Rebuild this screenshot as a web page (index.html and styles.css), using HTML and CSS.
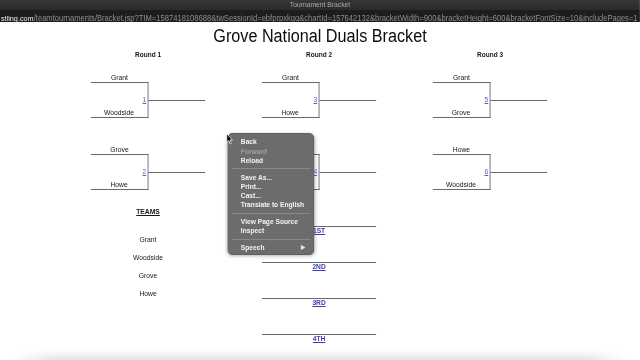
FILE: index.html
```html
<!DOCTYPE html>
<html lang="en">
<head>
<meta charset="utf-8">
<title>Tournament Bracket</title>
<link rel="stylesheet" href="styles.css">
</head>
<body>
<div class="viewport">
<div class="screen">
  <div class="titlebar">Tournament Bracket</div>
  <div class="urlbar"><span class="host">stling.com</span><span class="path">/teamtournaments/Bracket.jsp?TIM=1587418108688&amp;twSessionId=ebfprpxkqq&amp;chartId=157642132&amp;bracketWidth=900&amp;bracketHeight=600&amp;bracketFontSize=10&amp;includePages=1</span></div>

  <main class="page">
    <h1 class="title">Grove National Duals Bracket</h1>

    <div class="bracket">
      <section class="round">
        <h2 class="round-label">Round 1</h2>
        <div class="match">
          <div class="team">Grant</div>
          <div class="pair">
            <div class="box"><a class="num">1</a><div class="team">Woodside</div></div>
            <div class="out"></div>
          </div>
        </div>
        <div class="match">
          <div class="team">Grove</div>
          <div class="pair">
            <div class="box"><a class="num">2</a><div class="team">Howe</div></div>
            <div class="out"></div>
          </div>
        </div>
        <div class="teams">
          <div class="teams-head">TEAMS</div>
          <div class="teams-item">Grant</div>
          <div class="teams-item">Woodside</div>
          <div class="teams-item">Grove</div>
          <div class="teams-item">Howe</div>
        </div>
      </section>

      <section class="round">
        <h2 class="round-label">Round 2</h2>
        <div class="match">
          <div class="team">Grant</div>
          <div class="pair">
            <div class="box"><a class="num">3</a><div class="team">Howe</div></div>
            <div class="out"></div>
          </div>
        </div>
        <div class="match">
          <div class="team">Grove</div>
          <div class="pair">
            <div class="box"><a class="num">4</a><div class="team">Woodside</div></div>
            <div class="out"></div>
          </div>
        </div>
        <div class="places">
          <div class="place"><a>1ST</a></div>
          <div class="place"><a>2ND</a></div>
          <div class="place"><a>3RD</a></div>
          <div class="place"><a>4TH</a></div>
        </div>
      </section>

      <section class="round">
        <h2 class="round-label">Round 3</h2>
        <div class="match">
          <div class="team">Grant</div>
          <div class="pair">
            <div class="box"><a class="num">5</a><div class="team">Grove</div></div>
            <div class="out"></div>
          </div>
        </div>
        <div class="match">
          <div class="team">Howe</div>
          <div class="pair">
            <div class="box"><a class="num">6</a><div class="team">Woodside</div></div>
            <div class="out"></div>
          </div>
        </div>
      </section>
    </div>
  </main>

  <div class="bottom-fade"></div>

  <div class="menu">
    <div class="mi">Back</div>
    <div class="mi disabled">Forward</div>
    <div class="mi">Reload</div>
    <div class="sep"></div>
    <div class="mi">Save As...</div>
    <div class="mi">Print...</div>
    <div class="mi">Cast...</div>
    <div class="mi">Translate to English</div>
    <div class="sep"></div>
    <div class="mi">View Page Source</div>
    <div class="mi">Inspect</div>
    <div class="sep"></div>
    <div class="mi sub">Speech<span class="arrow">&#9654;</span></div>
  </div>

  <svg class="cursor" width="8" height="12" viewBox="0 0 8 12">
    <path d="M1 0.8 L1 9.6 L3.1 7.6 L4.7 11 L6 10.4 L4.5 7.1 L7.3 7.1 Z" fill="#000" stroke="#fff" stroke-width="0.8" stroke-linejoin="round"/>
  </svg>
</div>
</div>
</body>
</html>
```

FILE: styles.css
```css
html, body {
  margin: 0;
  padding: 0;
  width: 640px;
  height: 360px;
  overflow: hidden;
  background: #ffffff;
}

.viewport {
  width: 640px;
  height: 360px;
  overflow: hidden;
}

.screen {
  position: relative;
  width: 711.11px;
  height: 360px;
  transform: scaleX(0.9);
  transform-origin: 0 0;
  display: flex;
  flex-direction: column;
  overflow: hidden;
  font-family: "Liberation Sans", Arial, sans-serif;
  color: #161616;
  background: #ffffff;
}

.titlebar {
  height: 10px;
  line-height: 10px;
  background: linear-gradient(#363636, #2b2b2b);
  color: #a8a8a8;
  font-size: 7.5px;
  text-align: center;
  flex: none;
}

.urlbar {
  height: 12px;
  line-height: 12px;
  background: #1d1d1d;
  white-space: nowrap;
  overflow: hidden;
  padding-left: 1px;
  flex: none;
}

.host { color: #ececec; font-size: 8.1px; }
.path { color: #8d8d8d; font-size: 8.45px; }

.page {
  flex: 1;
  min-height: 0;
  overflow: hidden;
}

.title {
  margin: 5px 0 0;
  font-size: 18px;
  line-height: 18px;
  font-weight: normal;
  text-align: center;
  color: #0c0c0c;
}

.bracket {
  display: grid;
  grid-template-columns: repeat(3, 127px);
  column-gap: 63px;
  padding-left: 101px;
  margin-top: 6px;
  align-items: start;
}

.round-label {
  margin: 0 0 15px;
  font-size: 7.2px;
  line-height: 8px;
  font-weight: bold;
  text-align: center;
}

.match + .match {
  margin-top: 28px;
}

.team {
  width: 63.5px;
  font-size: 7.5px;
  line-height: 8px;
  text-align: center;
  white-space: nowrap;
}

.pair {
  display: flex;
  align-items: center;
}

.box {
  box-sizing: border-box;
  width: 63.5px;
  height: 36px;
  border: 1px solid #6a6a6a;
  border-left: none;
  display: grid;
  grid-template-rows: 1fr 8px 1fr;
}

.box .num {
  grid-row: 2;
  justify-self: end;
  font-size: 7.5px;
  line-height: 8px;
  color: #5f5fc0;
  text-decoration: underline;
  padding-right: 1px;
}

.box .team {
  grid-row: 3;
  align-self: end;
  width: auto;
}

.out {
  flex: 1;
  border-top: 1px solid #6a6a6a;
}

.teams {
  margin-top: 18px;
  display: flex;
  flex-direction: column;
  align-items: center;
  gap: 10px;
}

.teams-head {
  font-size: 7.5px;
  line-height: 8px;
  font-weight: bold;
  text-decoration: underline;
  margin-bottom: 10px;
}

.teams-item {
  font-size: 7.5px;
  line-height: 8px;
}

.places {
  margin-top: 36px;
}

.place {
  border-top: 1px solid #6a6a6a;
  text-align: center;
  font-size: 7.4px;
  line-height: 8px;
  height: 8px;
  margin-bottom: 27px;
}

.place a {
  font-weight: bold;
  color: #3a3fb2;
  text-decoration: underline;
}

.bottom-fade {
  flex: none;
  height: 10px;
  margin: 0 16px;
  background: linear-gradient(#ffffff, #e4e4e4);
  -webkit-mask-image: linear-gradient(to right, transparent, #000 6%, #000 94%, transparent);
  mask-image: linear-gradient(to right, transparent, #000 6%, #000 94%, transparent);
}

.menu {
  position: absolute;
  left: 253.3px;
  top: 133px;
  width: 95.6px;
  box-sizing: border-box;
  padding: 3.4px 0 1.5px;
  background: #6c6c6c;
  border: 0.5px solid #5c5c5c;
  border-radius: 5px;
  box-shadow: 0 1px 4px rgba(0, 0, 0, 0.3);
}

.mi {
  padding-left: 13.3px;
  padding-right: 8px;
  font-size: 7.4px;
  line-height: 9.2px;
  font-weight: bold;
  color: #f3f3f3;
  white-space: nowrap;
}

.mi.disabled {
  color: #9e9e9e;
}

.mi.sub {
  display: flex;
  justify-content: space-between;
  align-items: center;
}

.arrow {
  font-size: 5.5px;
  color: #e6e6e6;
}

.sep {
  height: 1px;
  margin: 3.3px 3px;
  background: #888888;
}

.cursor {
  position: absolute;
  left: 251px;
  top: 133px;
}
```
